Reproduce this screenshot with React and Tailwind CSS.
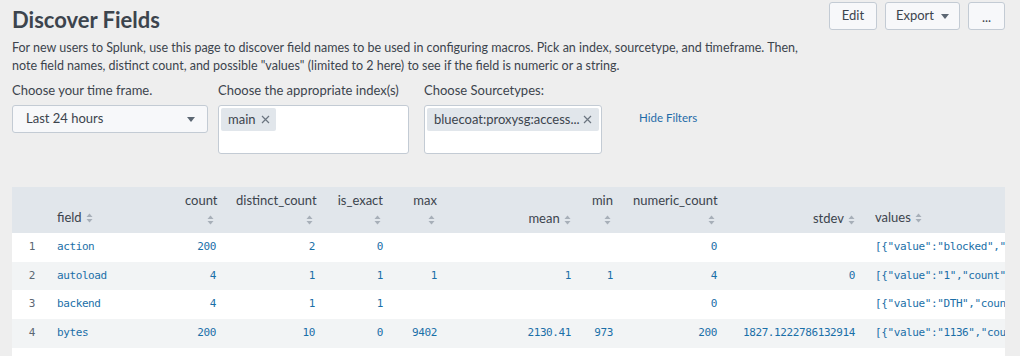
function SortIcon({ className = "" }) {
  return (
    <svg className={"inline-block w-[7px] h-[10px] " + className} viewBox="0 0 7 10" fill="#a7afb8">
      <path d="M3.5 0.5 L6.5 4 H0.5 Z" />
      <path d="M3.5 9.5 L6.5 6 H0.5 Z" />
    </svg>
  );
}

function Caret() {
  return (
    <svg className="inline-block w-[8px] h-[5px]" viewBox="0 0 8 5" fill="#5c6773">
      <path d="M0 0 H8 L4 5 Z" />
    </svg>
  );
}

function CloseX() {
  return (
    <svg className="inline-block w-[9px] h-[9px]" viewBox="0 0 9 9" stroke="#6b7580" strokeWidth="1.2" fill="none">
      <path d="M1 1 L8 8 M8 1 L1 8" />
    </svg>
  );
}

const columns = [
  { key: "count", label: "count", w: 51, wrap: true },
  { key: "distinct_count", label: "distinct_count", w: 99, wrap: true },
  { key: "is_exact", label: "is_exact", w: 68, wrap: true },
  { key: "max", label: "max", w: 54, wrap: true },
  { key: "mean", label: "mean", w: 134 },
  { key: "min", label: "min", w: 42, wrap: true },
  { key: "numeric_count", label: "numeric_count", w: 104, wrap: true },
  { key: "stdev", label: "stdev", w: 138 },
];

const rows = [
  { field: "action", count: "200", distinct_count: "2", is_exact: "0", max: "", mean: "", min: "", numeric_count: "0", stdev: "", values: '[{"value":"blocked","count":150},{"value":"allowed","count":50}]' },
  { field: "autoload", count: "4", distinct_count: "1", is_exact: "1", max: "1", mean: "1", min: "1", numeric_count: "4", stdev: "0", values: '[{"value":"1","count":4}]' },
  { field: "backend", count: "4", distinct_count: "1", is_exact: "1", max: "", mean: "", min: "", numeric_count: "0", stdev: "", values: '[{"value":"DTH","count":4}]' },
  { field: "bytes", count: "200", distinct_count: "10", is_exact: "0", max: "9402", mean: "2130.41", min: "973", numeric_count: "200", stdev: "1827.1222786132914", values: '[{"value":"1136","count":40}]' },
  { field: "c_ip", count: "200", distinct_count: "5", is_exact: "1", max: "", mean: "", min: "", numeric_count: "0", stdev: "", values: '[{"value":"10.0.0.1","count":60}]' },
];

const mono = "font-['DejaVu_Sans_Mono',monospace] text-[11px] tracking-[-0.4px]";

export default function App() {
  return (
    <div className="w-[1020px] h-[356px] overflow-hidden bg-[#eeeeee] font-['Lato',sans-serif] text-[#3c444d]">
      <div className="pl-[12px] pr-[15px] pt-[2px]">
        <div className="flex justify-between items-start">
          <h1 className="text-[22px] font-bold leading-[28px] pt-[4px] text-[#3c444d]">Discover Fields</h1>
          <div className="flex gap-[8px]">
            <button className="h-[28px] w-[48px] rounded-[3px] border border-[#c3cbd4] bg-[#f7f8fa] text-[13px]">Edit</button>
            <button className="h-[28px] w-[75px] rounded-[3px] border border-[#c3cbd4] bg-[#f7f8fa] text-[13px] flex items-center justify-center gap-[7px]">
              Export <Caret />
            </button>
            <button className="h-[28px] w-[37px] rounded-[3px] border border-[#c3cbd4] bg-[#f7f8fa] text-[13px] leading-none pt-[2px]">...</button>
          </div>
        </div>
        <p className="mt-[5px] text-[12.5px] leading-[18px] w-[805px]">
          For new users to Splunk, use this page to discover field names to be used in configuring macros. Pick an index, sourcetype, and timeframe. Then, note field names, distinct count, and possible "values" (limited to 2 here) to see if the field is numeric or a string.
        </p>
        <div className="flex mt-[5px] text-[13px]">
          <div className="w-[196px] mr-[10px]">
            <div className="leading-[20px]">Choose your time frame.</div>
            <div className="mt-[5px] h-[28px] rounded-[3px] border border-[#c3cbd4] bg-[#f7f8fa] flex items-center justify-between pl-[13px] pr-[12px]">
              <span>Last 24 hours</span>
              <Caret />
            </div>
          </div>
          <div className="w-[191px] mr-[15px]">
            <div className="leading-[20px]">Choose the appropriate index(s)</div>
            <div className="mt-[5px] h-[49px] rounded-[3px] border border-[#c3cbd4] bg-white p-[2px]">
              <span className="inline-flex items-center gap-[5px] h-[23px] bg-[#e1e6eb] rounded-[2px] pl-[7px] pr-[6px]">
                main <CloseX />
              </span>
            </div>
          </div>
          <div className="w-[178px] mr-[37px]">
            <div className="leading-[20px]">Choose Sourcetypes:</div>
            <div className="mt-[5px] h-[49px] rounded-[3px] border border-[#c3cbd4] bg-white p-[2px]">
              <span className="flex items-center justify-between h-[23px] bg-[#e1e6eb] rounded-[2px] pl-[7px] pr-[7px]">
                <span>bluecoat:proxysg:access...</span>
                <CloseX />
              </span>
            </div>
          </div>
          <div className="pt-[29px] text-[11.5px] text-[#1e6ba8]">Hide Filters</div>
        </div>
        <div className="mt-[33px] w-[993px] overflow-hidden bg-white">
          <table className="table-fixed border-collapse w-[1150px]">
            <colgroup>
              <col className="w-[35px]" />
              <col className="w-[128px]" />
              {columns.map((c) => (
                <col key={c.key} style={{ width: c.w }} />
              ))}
              <col className="w-[300px]" />
            </colgroup>
            <thead>
              <tr className="bg-[#e1e6eb] h-[46px] text-[13px] text-[#3c444d]">
                <th />
                <th className="text-left font-normal align-bottom pb-[6px] px-[10px] whitespace-nowrap">
                  field <SortIcon className="ml-[1px]" />
                </th>
                {columns.map((c) => (
                  <th key={c.key} className="text-right font-normal align-bottom pb-[6px] px-[10px] whitespace-nowrap leading-[18px]">
                    {c.wrap ? (
                      <>
                        <div>{c.label}</div>
                        <div className="pr-[2px]"><SortIcon /></div>
                      </>
                    ) : (
                      <span>
                        {c.label} <SortIcon className="ml-[1px]" />
                      </span>
                    )}
                  </th>
                ))}
                <th className="text-left font-normal align-bottom pb-[6px] px-[10px] whitespace-nowrap">
                  values <SortIcon className="ml-[1px]" />
                </th>
              </tr>
            </thead>
            <tbody>
              {rows.map((r, i) => (
                <tr key={r.field} className={"h-[28.7px] " + (i % 2 === 1 ? "bg-[#f2f4f5]" : "bg-white")}>
                  <td className={"text-right pr-[12px] text-[#5c6773] " + mono}>{i + 1}</td>
                  <td className={"px-[10px] text-[#1a6fa8] whitespace-nowrap " + mono}>{r.field}</td>
                  {columns.map((c) => (
                    <td key={c.key} className={"px-[10px] text-right text-[#1a6fa8] whitespace-nowrap " + mono}>
                      {r[c.key]}
                    </td>
                  ))}
                  <td className={"px-[10px] text-[#1a6fa8] whitespace-nowrap overflow-hidden " + mono}>{r.values}</td>
                </tr>
              ))}
            </tbody>
          </table>
        </div>
      </div>
    </div>
  );
}
